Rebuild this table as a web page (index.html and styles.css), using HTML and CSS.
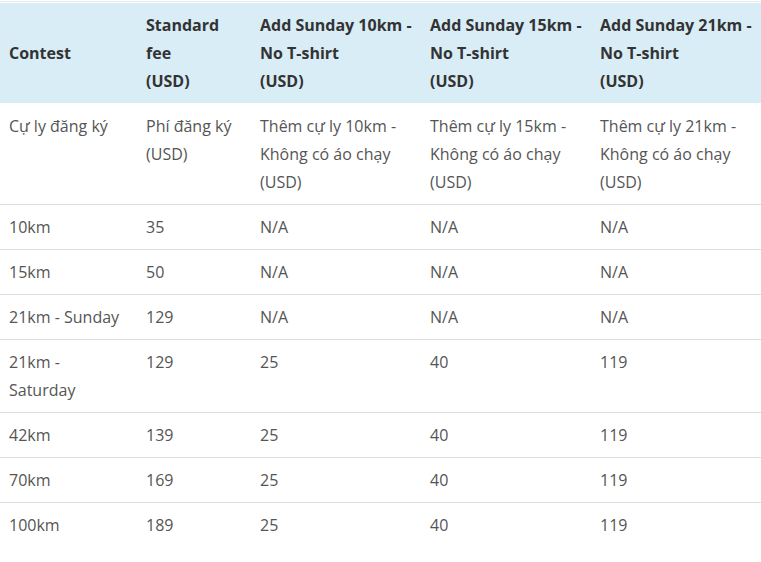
FILE: index.html
```html
<!DOCTYPE html>
<html>
<head>
<meta charset="utf-8">
<link rel="stylesheet" href="styles.css">
</head>
<body>
<div class="top-rule"></div>
<table class="fees">
  <colgroup>
    <col class="c1"><col class="c2"><col class="c3"><col class="c4"><col class="c5">
  </colgroup>
  <thead>
    <tr>
      <th class="mid">Contest</th>
      <th>Standard<br>fee<br>(USD)</th>
      <th>Add Sunday 10km -<br>No T-shirt<br>(USD)</th>
      <th>Add Sunday 15km -<br>No T-shirt<br>(USD)</th>
      <th>Add Sunday 21km -<br>No T-shirt<br>(USD)</th>
    </tr>
  </thead>
  <tbody>
    <tr><td>Cự ly đăng ký</td><td>Phí đăng ký (USD)</td><td>Thêm cự ly 10km - Không có áo chạy (USD)</td><td>Thêm cự ly 15km - Không có áo chạy (USD)</td><td>Thêm cự ly 21km - Không có áo chạy (USD)</td></tr>
    <tr><td>10km</td><td>35</td><td>N/A</td><td>N/A</td><td>N/A</td></tr>
    <tr><td>15km</td><td>50</td><td>N/A</td><td>N/A</td><td>N/A</td></tr>
    <tr><td>21km - Sunday</td><td>129</td><td>N/A</td><td>N/A</td><td>N/A</td></tr>
    <tr><td>21km - Saturday</td><td>129</td><td>25</td><td>40</td><td>119</td></tr>
    <tr><td>42km</td><td>139</td><td>25</td><td>40</td><td>119</td></tr>
    <tr><td>70km</td><td>169</td><td>25</td><td>40</td><td>119</td></tr>
    <tr><td>100km</td><td>189</td><td>25</td><td>40</td><td>119</td></tr>
  </tbody>
</table>
</body>
</html>
```
FILE: styles.css
```css
html, body {
  margin: 0;
  padding: 0;
  background: #ffffff;
}
body {
  font-family: "Open Sans", "Noto Sans", sans-serif;
  font-size: 16px;
  line-height: 28px;
  color: #555555;
}
.top-rule {
  height: 1px;
  margin-top: 1px;
  margin-bottom: 1px;
  background: #e4e9ec;
}
.fees {
  width: 761px;
  border-collapse: collapse;
  table-layout: fixed;
}
.c1 { width: 138px; }
.c2 { width: 114px; }
.c3 { width: 170px; }
.c4 { width: 170px; }
.c5 { width: 169px; }
.fees th {
  background: #d9edf7;
  color: #333333;
  font-weight: 700;
  text-align: left;
  vertical-align: top;
  padding: 8px;
}
.fees td {
  vertical-align: top;
  padding: 8px;
  border-top: 1px solid #dddddd;
}
.fees th:first-child,
.fees td:first-child {
  padding-left: 9px;
}
.fees th.mid {
  vertical-align: middle;
}
.fees tbody tr:first-child td {
  border-top: none;
  padding-top: 9px;
}
```
